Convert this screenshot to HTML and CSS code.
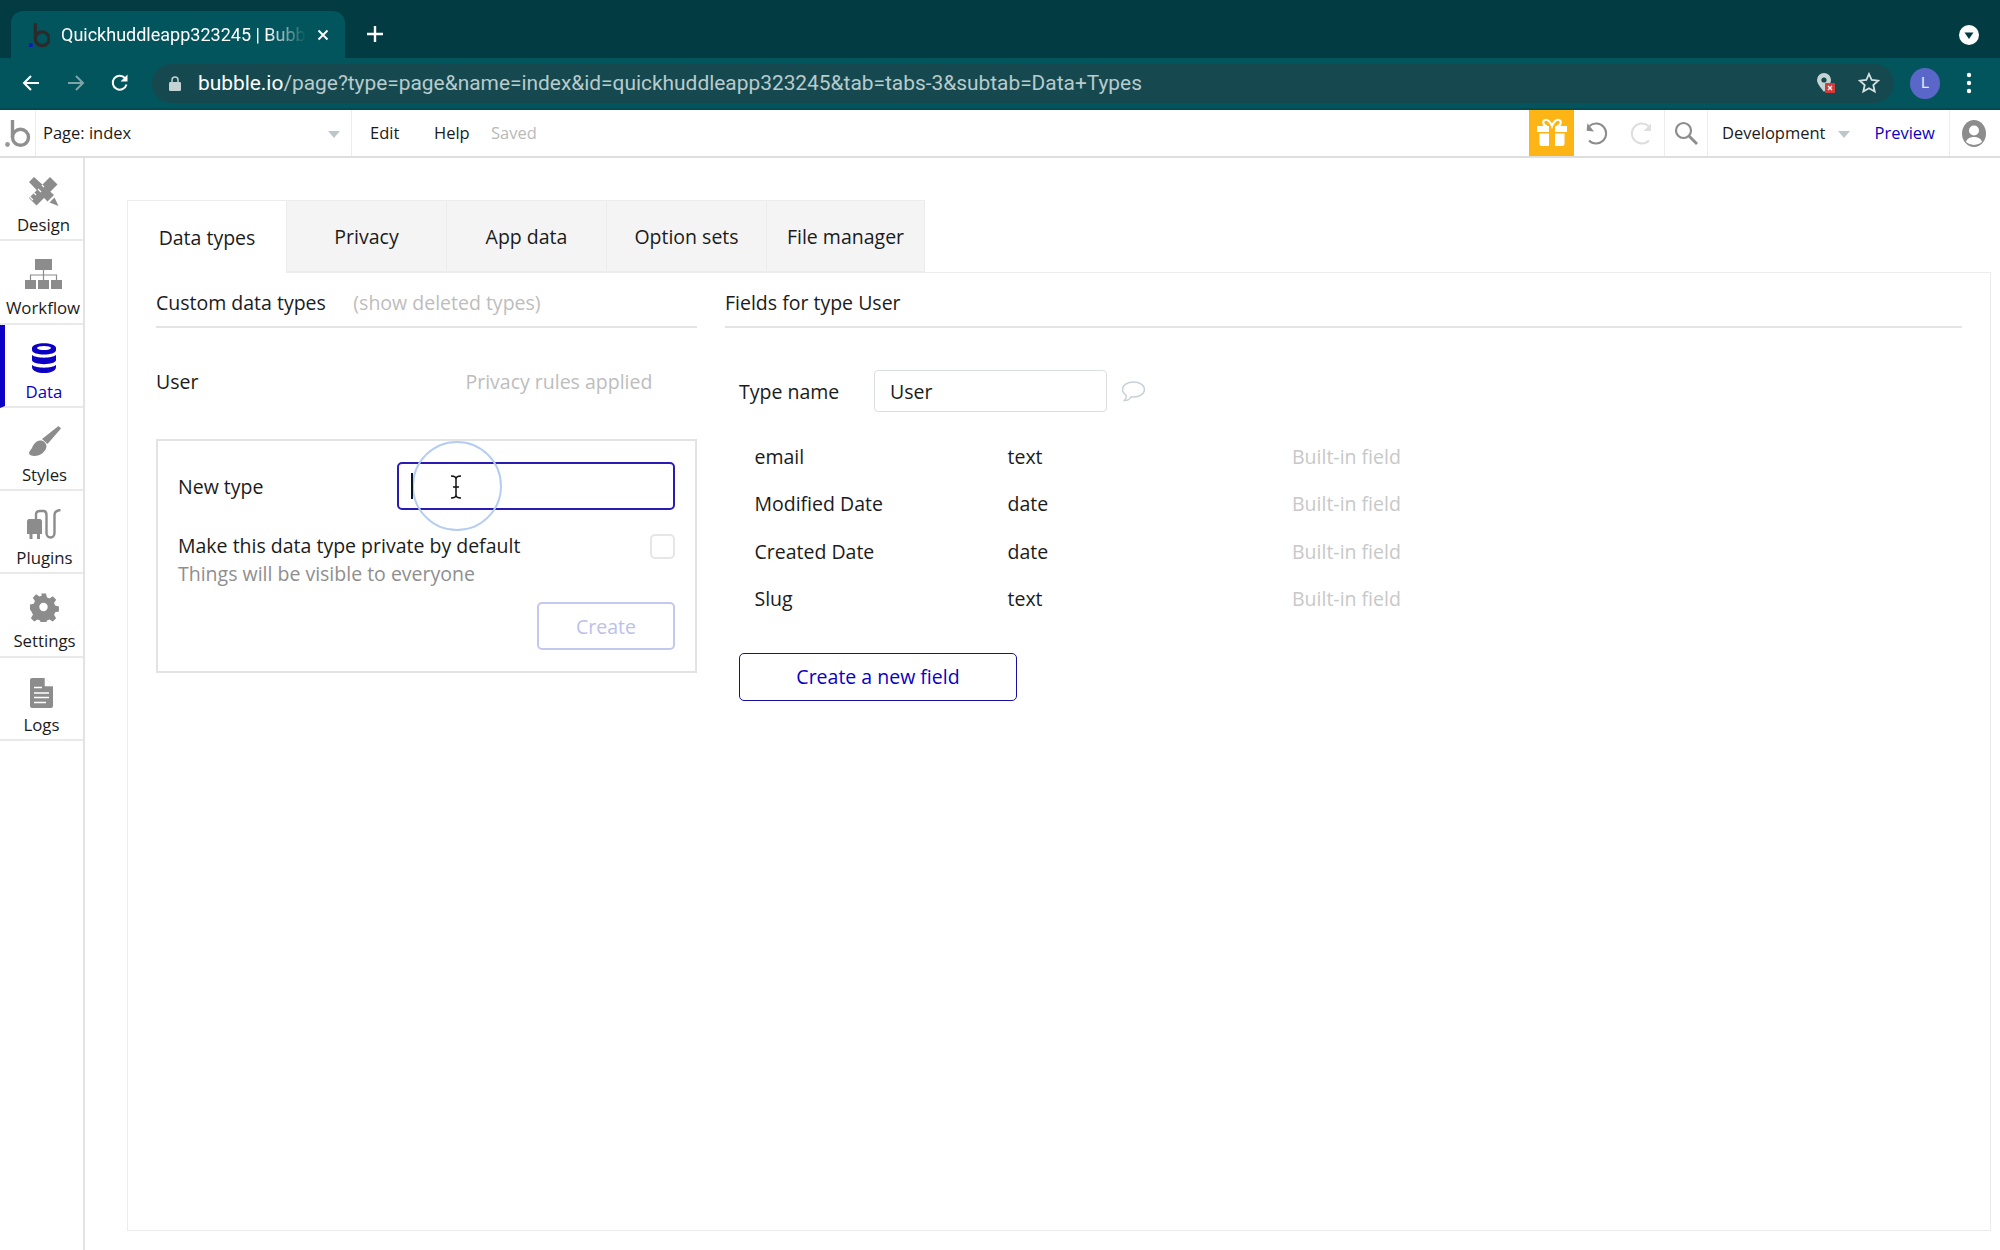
FILE: index.html
```html
<!DOCTYPE html>
<html lang="en">
<head>
<meta charset="utf-8">
<title>Quickhuddleapp323245 | Bubble</title>
<link rel="stylesheet" href="styles.css">
</head>
<body>
<header class="tabstrip">
  <div class="tab">
    <svg class="favicon" viewBox="0 0 24 28"><rect x="1" y="23" width="4" height="4" fill="#1414c8"/><path d="M8 1v17" stroke="#2b2b2b" stroke-width="3.6"/><circle cx="15.500" cy="18" r="7.500" fill="none" stroke="#2b2b2b" stroke-width="3.600"/></svg>
    <span class="tab-title">Quickhuddleapp323245 | Bubb</span>
    <svg class="tab-close" viewBox="0 0 12 12"><path d="M1.5 1.5l9 9M10.5 1.5l-9 9" stroke="#fff" stroke-width="1.9"/></svg>
  </div>
  <svg class="new-tab" viewBox="0 0 18 18"><path d="M9 1v16M1 9h16" stroke="#fff" stroke-width="2.4"/></svg>
  <svg class="tab-search" viewBox="0 0 20 20"><circle cx="10" cy="10" r="10" fill="#fff"/><path d="M5.5 7.5h9L10 14z" fill="#003b41"/></svg>
</header>
<nav class="browserbar">
  <svg class="nav-ico" viewBox="0 0 20 20"><path d="M18 10H3M10 3l-7 7 7 7" fill="none" stroke="#fff" stroke-width="2"/></svg>
  <svg class="nav-ico nav-next" viewBox="0 0 20 20"><path d="M2 10h15M10 3l7 7-7 7" fill="none" stroke="#7fa5a8" stroke-width="2"/></svg>
  <svg class="nav-ico nav-reload" viewBox="0 0 20 20"><path d="M16.5 11.5A7 7 0 1 1 15 5" fill="none" stroke="#fff" stroke-width="2"/><path d="M17.5 1.5v7h-7z" fill="#fff"/></svg>
  <div class="omnibox">
    <svg class="lock" viewBox="0 0 12 15"><path d="M3 6V4a3 3 0 0 1 6 0v2" fill="none" stroke="#c3d2d3" stroke-width="1.5"/><rect y="6" width="12" height="9" rx="1.2" fill="#c3d2d3"/></svg>
    <span class="url"><span class="url-host">bubble.io</span>/page?type=page&amp;name=index&amp;id=quickhuddleapp323245&amp;tab=tabs-3&amp;subtab=Data+Types</span>
    <svg class="ext" viewBox="0 0 20 22"><path d="M8 1a7 7 0 0 0-7 7c0 4 5 9 7 12 2-3 7-8 7-12a7 7 0 0 0-7-7z" fill="#c6d3d4"/><circle cx="8" cy="8" r="2.6" fill="#14484e"/><rect x="9" y="11" width="10" height="10" rx="1" fill="#d33a3a"/><path d="M12 14l4 4M16 14l-4 4" stroke="#fff" stroke-width="1.3"/></svg>
    <svg class="star" viewBox="0 0 22 22"><path d="M11 2l2.7 6 6.5.7-4.9 4.3 1.4 6.5L11 16.200l-5.700 3.300 1.400-6.500L1.800 8.700 8.300 8z" fill="none" stroke="#d6e2e3" stroke-width="1.8"/></svg>
  </div>
  <div class="avatar">L</div>
  <svg class="kebab" viewBox="0 0 6 22"><circle cx="3" cy="3" r="2.2" fill="#fff"/><circle cx="3" cy="11" r="2.2" fill="#fff"/><circle cx="3" cy="19" r="2.2" fill="#fff"/></svg>
</nav>
<div class="appbar">
  <div class="logo-cell">
    <svg class="logo" viewBox="0 0 26 27" width="26" height="27"><circle cx="2.500" cy="24.500" r="2.400" fill="#999"/><path d="M7.500 0v17.300" stroke="#8f8f8f" stroke-width="3.400"/><circle cx="15.500" cy="17.300" r="8" fill="none" stroke="#8f8f8f" stroke-width="3.400"/></svg>
  </div>
  <div class="page-select"><span>Page: index</span><i class="caret"></i></div>
  <div class="menu">
    <span class="menu-edit">Edit</span><span class="menu-help">Help</span><span class="saved">Saved</span>
  </div>
  <div class="gift">
    <svg viewBox="0 0 30 30" width="30" height="30"><path d="M10 8C6 8 5 3 8 2s6 3 7 6c1-3 4-7 7-6s2 6-2 6" fill="none" stroke="#fff" stroke-width="2"/><path d="M0 8h12v6H0zM18 8h12v6H18zM2.500 15.500H12V28H4.500a2 2 0 0 1-2-2zM18 15.500h9.500V26a2 2 0 0 1-2 2H18z" fill="#fff"/></svg>
  </div>
  <div class="history">
    <svg viewBox="0 0 24 24" width="24" height="24"><path d="M5 19.500A10 10 0 1 0 5.500 5" fill="none" stroke="#8c8c8c" stroke-width="2"/><path d="M3 2.500v7.500h7.500z" fill="#8c8c8c" transform="rotate(6 5 6)"/></svg>
    <svg viewBox="0 0 24 24" width="24" height="24"><path d="M19 19.500A10 10 0 1 1 18.500 5" fill="none" stroke="#dedede" stroke-width="2"/><path d="M21 2.500v7.500h-7.500z" fill="#dedede"/></svg>
  </div>
  <div class="search-cell">
    <svg viewBox="0 0 24 24" width="24" height="24"><circle cx="9.500" cy="9.500" r="7.500" fill="none" stroke="#8c8c8c" stroke-width="2.200"/><path d="M15 15l8 8" stroke="#8c8c8c" stroke-width="2.800"/></svg>
  </div>
  <div class="env">
    <span>Development</span><i class="caret"></i><span class="preview">Preview</span>
  </div>
  <div class="user-cell">
    <svg viewBox="0 0 24 27" width="24" height="27"><ellipse cx="12" cy="13.500" rx="12" ry="13.500" fill="#8c8c8c"/><circle cx="12" cy="10.500" r="5" fill="#fff"/><path d="M4 22c1-4 5-5 8-5s7 1 8 5a12 12 0 0 1-16 0z" fill="#fff"/></svg>
  </div>
</div>
<div class="workspace">
  <aside class="sidebar">
    <a class="side-item side-design">
      <svg class="side-ico" viewBox="0 0 31 30" width="31" height="30"><g fill="#8c8c8c"><path d="M22 1l7.500 7.500L8.500 29.500 1 22z"/><path d="M1 6l5-5 20 18-6.500 6.500z"/><path d="M26.500 21.500l-5 5 9 3.500z"/></g><path d="M5 18l3 3M9 14l2 2M13 10l3 3M17 6l2 2" stroke="#fff" stroke-width="1.200" transform="translate(-3 3)"/><path d="M20 26.500l6.500-6.500" stroke="#fff" stroke-width="1"/></svg>
      <span>Design</span>
    </a>
    <a class="side-item side-workflow">
      <svg class="side-ico" viewBox="0 0 37 30" width="37" height="30"><g fill="#8c8c8c"><rect x="10" width="17" height="11"/><rect y="21" width="11" height="9"/><rect x="13" y="21" width="11" height="9"/><rect x="26" y="21" width="11" height="9"/></g><path d="M18.500 11v10M5.500 21v-5h26v5" fill="none" stroke="#8c8c8c" stroke-width="1.200"/></svg>
      <span>Workflow</span>
    </a>
    <a class="side-item active">
      <svg class="side-ico" viewBox="0 0 24 30" width="24" height="30"><g fill="#0c00c4"><path d="M0 5c0-6.500 24-6.500 24 0v2c0 6-24 6-24 0z"/><path d="M0 12c4 3.500 20 3.500 24 0v5c0 5.500-24 5.500-24 0z"/><path d="M0 22c4 3.500 20 3.500 24 0v2c0 8-24 8-24 0z"/></g><ellipse cx="12" cy="5" rx="7" ry="2" fill="#fff"/></svg>
      <span>Data</span>
    </a>
    <a class="side-item">
      <svg class="side-ico" viewBox="0 0 32 30" width="32" height="30"><path d="M29.500 0L32 2.500 18.500 18 13 13z" fill="#8c8c8c"/><path d="M11 14.500c3-.5 6 2 6.500 5.500 0 5-6 10-12 10-3 0-5.500-1-5.500-3 0-2 2-3 3-5 1.500-4 4-7 8-7.500z" fill="#8c8c8c"/></svg>
      <span>Styles</span>
    </a>
    <a class="side-item side-plugins">
      <svg class="side-ico" viewBox="0 0 34 30" width="34" height="30"><g fill="#8c8c8c"><path d="M1.500 10h12l1.500 1.500V25H0V11.500z"/><rect x="2.500" y="25" width="3" height="5"/><rect x="10" y="25" width="3" height="5"/></g><path d="M9 10V5.500C9 3 10.500 2 13 2h3.500C18.500 2 19.500 3.500 19.500 6v18c0 6 8 6 8 0V6c0-3 1.500-4.500 6-5" fill="none" stroke="#8c8c8c" stroke-width="2.400"/></svg>
      <span>Plugins</span>
    </a>
    <a class="side-item side-settings">
      <svg class="side-ico" viewBox="0 0 32 32" width="31" height="31"><path fill="#8c8c8c" fill-rule="evenodd" d="M13 0h6l1 4.500 3 1.300 4-2.500 4 4-2.500 4 1.300 3 4.500 1v6l-4.500 1-1.300 3 2.500 4-4 4-4-2.500-3 1.300-1 4.500h-6l-1-4.500-3-1.300-4 2.500-4-4 2.500-4-1.300-3L0 19v-6l4.500-1 1.300-3-2.500-4 4-4 4 2.500 3-1.300zM16 11a5 5 0 1 0 0 10 5 5 0 0 0 0-10z" transform="translate(1.600 1.600) scale(.9)"/></svg>
      <span>Settings</span>
    </a>
    <a class="side-item side-logs">
      <svg class="side-ico" viewBox="0 0 23 30" width="23" height="30"><path d="M2 0h13l8 8v20a2 2 0 0 1-2 2H2a2 2 0 0 1-2-2V2a2 2 0 0 1 2-2z" fill="#8c8c8c"/><path d="M15 0v8h8z" fill="#fff" stroke="#fff" stroke-width=".6"/><path d="M4 9.500h8M4 15h15M4 19.500h15M4 24.500h12" stroke="#fff" stroke-width="1.400"/></svg>
      <span>Logs</span>
    </a>
  </aside>
  <main class="main">
    <div class="tabs">
      <div class="tabs-item current">Data types</div>
      <div class="tabs-item">Privacy</div>
      <div class="tabs-item">App data</div>
      <div class="tabs-item">Option sets</div>
      <div class="tabs-item tabs-last">File manager</div>
    </div>
    <section class="panel">
      <div class="col-types">
        <div class="col-head">
          <span>Custom data types</span><span class="muted show-deleted">(show deleted types)</span>
        </div>
        <div class="type-row"><span>User</span><span class="muted">Privacy rules applied</span></div>
        <form class="new-card">
          <div class="new-row">
            <label>New type</label>
            <div class="new-input">
              <span class="click-ring"></span>
              <i class="caret-bar"></i>
              <svg class="ibeam" viewBox="0 0 12 24" width="12" height="24"><path d="M1 1c3 0 5 1 5 3v16c0 2-2 3-5 3M11 1c-3 0-5 1-5 3v16c0 2 2 3 5 3M3 12h6" fill="none" stroke="#111" stroke-width="1.500"/></svg>
            </div>
          </div>
          <div class="private-row">
            <div>
              <div>Make this data type private by default</div>
              <div class="sub">Things will be visible to everyone</div>
            </div>
            <i class="check"></i>
          </div>
          <div class="create-row"><button class="btn-create" type="button">Create</button></div>
        </form>
      </div>
      <div class="col-fields">
        <div class="col-head">Fields for type User</div>
        <div class="fields-body">
          <div class="name-row">
            <span class="name-label">Type name</span>
            <div class="name-input">User</div>
            <svg class="comment" viewBox="0 0 25 22" width="25" height="21"><path d="M12.500 1C6 1 1 4.500 1 9c0 2.500 1.500 4.500 4 6 0 2-.5 4-2 5.500 3 0 6-2 7-4 1 .2 1.500.2 2.500.2C19 16.700 24 13.500 24 9s-5-8-11.500-8z" fill="none" stroke="#c5d1d6" stroke-width="1.500"/></svg>
          </div>
          <div class="field-list">
            <div class="field"><span>email</span><span>text</span><span class="faint">Built-in field</span></div>
            <div class="field"><span>Modified Date</span><span>date</span><span class="faint">Built-in field</span></div>
            <div class="field"><span>Created Date</span><span>date</span><span class="faint">Built-in field</span></div>
            <div class="field"><span>Slug</span><span>text</span><span class="faint">Built-in field</span></div>
          </div>
          <button class="btn-new" type="button">Create a new field</button>
        </div>
      </div>
    </section>
  </main>
</div>
</body>
</html>
```
FILE: styles.css
```css
* { box-sizing: border-box; }
html, body { margin: 0; height: 100%; }
body {
  width: 2000px;
  height: 1250px;
  overflow: hidden;
  display: flex;
  flex-direction: column;
  background: #fff;
  color: #1b1b1b;
  font-family: "Open Sans", "Liberation Sans", sans-serif;
  font-size: 19.5px;
}

/* browser chrome */
.tabstrip {
  height: 58px;
  flex: none;
  background: #023b41;
  display: flex;
  align-items: flex-end;
  padding-left: 11px;
  font-family: Roboto, "Liberation Sans", sans-serif;
}
.tab {
  width: 334px;
  height: 47px;
  background: #03555d;
  border-radius: 12px 12px 0 0;
  display: flex;
  align-items: center;
  padding-left: 17px;
  color: #fff;
}
.favicon { width: 22px; height: 26px; flex: none; }
.tab-title {
  margin-left: 11px;
  width: 245px;
  font-size: 18px;
  white-space: nowrap;
  overflow: hidden;
  -webkit-mask-image: linear-gradient(to right, #000 84%, transparent 100%);
  mask-image: linear-gradient(to right, #000 84%, transparent 100%);
}
.tab-close { width: 12px; height: 12px; margin-left: 11px; flex: none; }
.new-tab { width: 18px; height: 18px; margin: 0 0 15px 21px; }
.tab-search { width: 20px; height: 20px; margin: 0 21px 13px auto; }

.browserbar {
  height: 52px;
  flex: none;
  background: #03555d;
  border-bottom: 2px solid #034a51;
  display: flex;
  align-items: center;
  padding-left: 21px;
  font-family: Roboto, "Liberation Sans", sans-serif;
}
.nav-ico { width: 20px; height: 20px; flex: none; }
.nav-next { margin-left: 25px; }
.nav-reload { margin-left: 24px; }
.omnibox {
  margin-left: 22px;
  width: 1742px;
  height: 39px;
  border-radius: 20px;
  background: #15494f;
  display: flex;
  align-items: center;
  padding-left: 17px;
}
.lock { width: 12px; height: 15px; flex: none; }
.url { margin-left: 17px; font-size: 20.9px; color: #b9cbcd; white-space: nowrap; }
.url-host { color: #fff; }
.ext { width: 20px; height: 22px; margin-left: auto; flex: none; }
.star { width: 22px; height: 22px; margin: 0 14px 0 22px; flex: none; }
.avatar {
  width: 30px;
  height: 31px;
  margin-left: 16px;
  border-radius: 50%;
  background: #5a67c8;
  color: #e8eaf8;
  font-size: 15px;
  display: flex;
  align-items: center;
  justify-content: center;
  flex: none;
}
.kebab { width: 6px; height: 22px; margin-left: 26px; flex: none; }

/* bubble top bar */
.appbar {
  height: 48px;
  flex: none;
  background: #fff;
  border-bottom: 2px solid #dedede;
  display: flex;
  align-items: stretch;
  font-size: 16.5px;
  line-height: 44px;
}
.logo-cell {
  width: 36px;
  border-right: 1px solid #ececec;
  display: flex;
  align-items: center;
  justify-content: center;
}
.page-select {
  width: 316px;
  border-right: 1px solid #ececec;
  display: flex;
  align-items: center;
  padding-left: 7px;
}
.caret {
  display: block;
  width: 0;
  height: 0;
  border-left: 6px solid transparent;
  border-right: 6px solid transparent;
  border-top: 7px solid #bcc7cc;
  margin-top: 3px;
}
.page-select .caret { margin-left: auto; margin-right: 11px; }
.menu { display: flex; align-items: center; padding-left: 18px; width: 1177px; }
.menu-edit { width: 64px; }
.menu-help { width: 57px; }
.saved { color: #b9b9b9; }
.gift {
  width: 45px;
  background: #fdb515;
  display: flex;
  align-items: center;
  justify-content: center;
}
.history {
  width: 91px;
  border-right: 1px solid #ececec;
  display: flex;
  align-items: center;
  gap: 22px;
  padding-left: 10px;
}
.search-cell {
  width: 43px;
  border-right: 1px solid #ececec;
  display: flex;
  align-items: center;
  justify-content: center;
}
.env {
  width: 242px;
  border-right: 1px solid #ececec;
  display: flex;
  align-items: center;
  padding-left: 14px;
}
.env .caret { margin-left: 13px; }
.preview { margin-left: 24px; color: #0c00c4; }
.user-cell { flex: 1; display: flex; align-items: center; padding-left: 12px; }

/* workspace */
.workspace { flex: 1; display: flex; min-height: 0; }
.sidebar {
  width: 85px;
  flex: none;
  border-right: 2px solid #e3e3e3;
  display: flex;
  flex-direction: column;
}
.side-item {
  height: 83.3px;
  flex: none;
  border-bottom: 2px solid #e9e9e9;
  display: flex;
  flex-direction: column;
  align-items: center;
  padding: 18px 0 0 6px;
  font-size: 16.8px;
  color: #1b1b1b;
  line-height: 22px;
}
.side-ico { height: 30px; flex: none; margin-bottom: 8px; }
.side-item.active {
  color: #0c00c4;
  border-left: 5px solid #0c00c4;
  padding-left: 0;
}
.side-design { padding-left: 4px; }
.side-workflow { padding-left: 3px; }
.side-plugins .side-ico { margin-right: 2px; }
.side-settings .side-ico { margin-right: 3px; }
.side-logs { padding-left: 0; }
.side-logs .side-ico { margin-top: 2px; margin-bottom: 6px; }

.main {
  flex: 1;
  padding: 42px 9px 19px 42px;
  display: flex;
  flex-direction: column;
  min-width: 0;
}
.tabs { display: flex; height: 72px; flex: none; position: relative; z-index: 1; }
.tabs-item {
  width: 160px;
  background: #f4f4f4;
  border: 1px solid #ececec;
  border-left: 0;
  display: flex;
  align-items: center;
  justify-content: center;
  font-size: 19.5px;
}
.tabs-item.current {
  background: #fff;
  border-left: 1px solid #ececec;
  border-bottom: 0;
  height: 73px;
}
.tabs-last { width: 158px; }
.panel {
  flex: 1;
  border: 1px solid #ececec;
  display: flex;
  gap: 28px;
  padding: 0 28px;
  min-height: 0;
}
.col-types { width: 541px; flex: none; }
.col-fields { flex: 1; min-width: 0; }
.col-head {
  height: 55px;
  border-bottom: 2px solid #e4e4e4;
  display: flex;
  align-items: center;
  padding-top: 5px;
}
.muted { color: #bdbdbd; }
.show-deleted { margin-left: 27.5px; }
.type-row {
  height: 111px;
  display: flex;
  align-items: flex-start;
  padding-top: 41px;
  line-height: 26px;
}
.type-row .muted { margin-left: 267px; }

.new-card {
  height: 234px;
  border: 2px solid #e3e3e3;
  padding: 21px 0 0 20px;
}
.new-row { display: flex; align-items: center; height: 48px; }
.new-row label { width: 219px; }
.new-input {
  width: 278px;
  height: 48px;
  border: 2px solid #2a1bb4;
  border-radius: 5px;
  position: relative;
  display: flex;
  align-items: center;
  padding-left: 12px;
}
.caret-bar { display: block; position: relative; width: 2px; height: 26px; flex: none; background: #0a1a22; }
.click-ring {
  position: absolute;
  left: 13px;
  top: -23px;
  width: 90px;
  height: 90px;
  border-radius: 50%;
  border: 2px solid #b6cdf2;
}
.ibeam { position: absolute; left: 51px; top: 11px; }
.private-row {
  display: flex;
  justify-content: space-between;
  align-items: flex-start;
  margin-top: 22px;
  padding-right: 20px;
  line-height: 28px;
}
.sub { color: #8e8e8e; }
.check {
  display: block;
  width: 25px;
  height: 25px;
  border: 2px solid #e6e6e6;
  border-radius: 5px;
  margin-top: 2px;
}
.create-row { display: flex; justify-content: flex-end; margin-top: 14px; padding-right: 20px; }
.btn-create {
  width: 138px;
  height: 48px;
  background: #fff;
  border: 2px solid #c4c8ee;
  border-radius: 5px;
  color: #bcc1ea;
  font: inherit;
}

.fields-body { padding-left: 14px; }
.name-row { display: flex; align-items: center; height: 42px; margin-top: 42px; }
.name-label { width: 135px; }
.name-input {
  width: 233px;
  height: 42px;
  border: 1px solid #dcdfe1;
  border-radius: 4px;
  padding-left: 15px;
  display: flex;
  align-items: center;
}
.comment { margin: 0 0 0 14px; }
.field-list { margin-top: 21px; }
.field {
  display: grid;
  grid-template-columns: 253px 284.5px auto;
  height: 47.3px;
  align-items: center;
  padding-left: 15.5px;
}
.faint { color: #c8c8c8; }
.btn-new {
  display: block;
  margin-top: 31px;
  width: 278px;
  height: 48px;
  padding-bottom: 2px;
  background: #fff;
  border: 1.5px solid #16109e;
  border-radius: 5px;
  color: #0c00c4;
  font: inherit;
}
```
